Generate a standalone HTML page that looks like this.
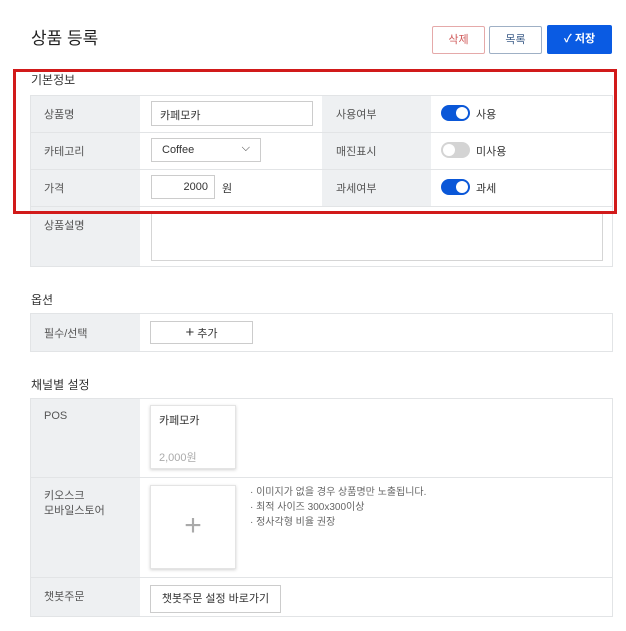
<!DOCTYPE html>
<html><head><meta charset="utf-8"><style>
*{margin:0;padding:0;box-sizing:border-box}
body{width:626px;height:631px;background:#fff;font-family:"Liberation Sans","Noto Sans CJK KR",sans-serif;color:#333;position:relative;overflow:hidden}
.a{position:absolute}
.t{font-size:11px;color:#555}
.lab{background:#eef0f2}
.box{border:1px solid #ccc;background:#fff}
.tg{position:absolute;width:29px;height:16px;border-radius:8px;background:#0a57d8}
.tg::after{content:"";position:absolute;right:2px;top:2px;width:12px;height:12px;border-radius:50%;background:#fff}
.tg.off{background:#d4d4d4}
.tg.off::after{left:2px;right:auto}
.hl{position:absolute;height:1px;background:#e2e4e6}
.vl{position:absolute;width:1px;background:#e2e4e6}
</style></head><body>
<div class="a" style="left:31px;top:24px;font-size:17px;color:#222">상품 등록</div>
<div class="a" style="left:432px;top:26px;width:53px;height:28px;border:1px solid #e5a9a9;border-radius:2px;font-size:11px;color:#d05a5a;text-align:center;line-height:26px">삭제</div>
<div class="a" style="left:489px;top:26px;width:53px;height:28px;border:1px solid #9fb0c5;border-radius:2px;font-size:11px;color:#3f5f8a;text-align:center;line-height:26px">목록</div>
<div class="a" style="left:547px;top:25px;width:65px;height:29px;background:#0a5be3;border-radius:2px;font-size:11px;color:#fff;text-align:center;line-height:29px;font-weight:bold">✓ 저장</div>

<div class="a" style="left:31px;top:71px;font-size:12px;color:#333">기본정보</div>
<!-- basic table -->
<div class="a" style="left:30px;top:95px;width:583px;height:172px;border:1px solid #e2e4e6"></div>
<div class="a lab" style="left:31px;top:96px;width:109px;height:170px"></div>
<div class="a lab" style="left:322px;top:96px;width:109px;height:110px"></div>
<div class="hl" style="left:30px;top:132px;width:583px"></div>
<div class="hl" style="left:30px;top:169px;width:583px"></div>
<div class="hl" style="left:30px;top:206px;width:583px"></div>
<div class="a t" style="left:44px;top:106px">상품명</div>
<div class="a t" style="left:44px;top:143px">카테고리</div>
<div class="a t" style="left:44px;top:180px">가격</div>
<div class="a t" style="left:44px;top:217px">상품설명</div>
<div class="a t" style="left:336px;top:106px">사용여부</div>
<div class="a t" style="left:336px;top:143px">매진표시</div>
<div class="a t" style="left:336px;top:180px">과세여부</div>
<div class="a box" style="left:151px;top:101px;width:162px;height:25px;font-size:11px;padding:5px 8px;color:#333">카페모카</div>
<div class="a box" style="left:151px;top:138px;width:110px;height:24px;font-size:11px;padding:5px 10px;color:#333">Coffee<span style="position:absolute;right:10px;top:3px;font-size:11px">⌵</span></div>
<div class="a box" style="left:151px;top:175px;width:64px;height:24px;font-size:11px;padding:5px 6px;text-align:right;color:#333">2000</div>
<div class="a t" style="left:222px;top:180px;color:#333">원</div>
<div class="tg" style="left:441px;top:105px"></div><div class="a t" style="left:476px;top:106px;color:#333">사용</div>
<div class="tg off" style="left:441px;top:142px"></div><div class="a t" style="left:476px;top:143px;color:#333">미사용</div>
<div class="tg" style="left:441px;top:179px"></div><div class="a t" style="left:476px;top:180px;color:#333">과세</div>
<div class="a box" style="left:151px;top:211px;width:452px;height:50px;border-color:#d5d5d5"></div>
<div class="a" style="left:13px;top:69px;width:604px;height:145px;border:3px solid #d11a1a"></div>

<div class="a" style="left:31px;top:291px;font-size:12px">옵션</div>
<div class="a" style="left:30px;top:313px;width:583px;height:39px;border:1px solid #e2e4e6"></div>
<div class="a lab" style="left:31px;top:314px;width:109px;height:37px"></div>
<div class="a t" style="left:44px;top:325px">필수/선택</div>
<div class="a box" style="left:150px;top:321px;width:103px;height:23px;font-size:11px;text-align:center;line-height:21px"><span style="font-size:15px">+</span> 추가</div>

<div class="a" style="left:31px;top:376px;font-size:12px">채널별 설정</div>
<div class="a" style="left:30px;top:398px;width:583px;height:219px;border:1px solid #e2e4e6"></div>
<div class="a lab" style="left:31px;top:399px;width:109px;height:217px"></div>
<div class="hl" style="left:30px;top:477px;width:583px"></div>
<div class="hl" style="left:30px;top:577px;width:583px"></div>
<div class="a t" style="left:44px;top:410px">POS</div>
<div class="a t" style="left:44px;top:489px;line-height:15px">키오스크<br>모바일스토어</div>
<div class="a t" style="left:44px;top:588px">챗봇주문</div>
<div class="a" style="left:150px;top:405px;width:86px;height:64px;border:1px solid #e4e4e4;box-shadow:0 1px 3px rgba(0,0,0,.18);background:#fff"></div>
<div class="a t" style="left:159px;top:412px;color:#333">카페모카</div>
<div class="a t" style="left:159px;top:449px;color:#aaa">2,000원</div>
<div class="a" style="left:150px;top:485px;width:86px;height:84px;border:1px solid #e4e4e4;box-shadow:0 1px 3px rgba(0,0,0,.18);background:#fff;text-align:center;line-height:80px;font-size:30px;color:#aaa;font-weight:100">+</div>
<div class="a" style="left:250px;top:485px;font-size:10px;color:#666;line-height:15px">· 이미지가 없을 경우 상품명만 노출됩니다.<br>· 최적 사이즈 300x300이상<br>· 정사각형 비율 권장</div>
<div class="a box" style="left:150px;top:585px;width:131px;height:28px;font-size:11px;text-align:center;line-height:26px;color:#333">챗봇주문 설정 바로가기</div>
</body></html>
